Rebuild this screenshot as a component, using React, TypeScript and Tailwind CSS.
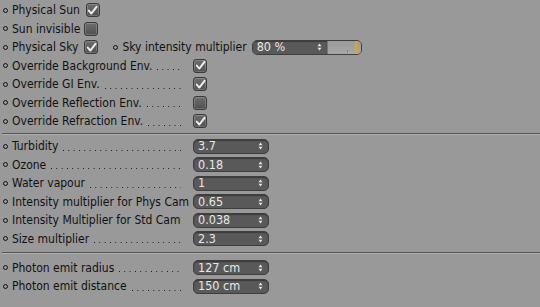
import React from 'react';

const FONT = { fontFamily: '"DejaVu Sans Condensed", "DejaVu Sans", sans-serif' };

function Bullet() {
  return <span className="mr-[4px] inline-block h-[5px] w-[5px] shrink-0 rounded-full border border-[#111]" />;
}

function Check({ on }: { on: boolean }) {
  return (
    <span className="relative inline-flex h-[14px] w-[14px] shrink-0 items-center justify-center rounded-[3px] border border-[#3a3a3a] bg-gradient-to-b from-[#6e6e6e] to-[#505050] shadow-[inset_0_0_0_1px_rgba(255,255,255,0.18)]">
      {on && (
        <svg width="11" height="11" viewBox="0 0 11 11">
          <path d="M1.8 5.6 L4.3 8.6 L9.5 1.8" fill="none" stroke="#f0f0f0" strokeWidth="1.9" strokeLinecap="round" strokeLinejoin="round" />
        </svg>
      )}
    </span>
  );
}

function Spinner() {
  return (
    <svg width="5" height="8" viewBox="0 0 5 8" className="shrink-0">
      <path d="M0.5 3.2 L2.5 0.6 L4.5 3.2 Z" fill="#e6e6e6" />
      <path d="M0.5 4.8 L2.5 7.4 L4.5 4.8 Z" fill="#e6e6e6" />
    </svg>
  );
}

function Field({ value }: { value: string }) {
  return (
    <div className="flex h-[15px] w-[76px] items-center justify-between rounded-[5px] border border-[#3e3e3e] bg-[#595959] pl-[4px] pr-[5px] text-[12.5px] leading-none text-[#e8e8e8] shadow-[inset_0_1px_1px_rgba(0,0,0,0.35)]">
      <span>{value}</span>
      <Spinner />
    </div>
  );
}

function Dots() {
  return (
    <span className="mb-[5px] ml-[5px] mr-[2px] h-px min-w-0 flex-1 self-end bg-[linear-gradient(to_right,#151515_1px,transparent_1px)] bg-[length:5.33px_1px] bg-repeat-x" />
  );
}

function LeaderRow({ label, children, dots = true }: { label: string; children: React.ReactNode; dots?: boolean }) {
  return (
    <div className="flex h-[18.5px] items-center pl-[3px]">
      <div className="flex h-full w-[180px] items-center">
        <Bullet />
        <span className="whitespace-nowrap">{label}</span>
        {dots ? <Dots /> : <span className="flex-1" />}
      </div>
      <div className="ml-[10px] flex items-center">{children}</div>
    </div>
  );
}

function Separator({ h }: { h: string }) {
  return (
    <div className={`ml-[2px] flex flex-col justify-center ${h}`}>
      <div className="h-px bg-[#555]" />
      <div className="h-px bg-[#b0b0b0]" />
    </div>
  );
}

export default function App() {
  return (
    <div className="h-[307px] w-[540px] overflow-hidden bg-[#999999] pt-[1px] text-[12px] text-[#111]" style={FONT}>
      <div className="flex h-[18.5px] items-center pl-[3px]">
        <Bullet />
        <span className="mr-[6px]">Physical Sun</span>
        <Check on />
      </div>
      <div className="flex h-[18.5px] items-center pl-[3px]">
        <Bullet />
        <span className="mr-[4px]">Sun invisible</span>
        <Check on={false} />
      </div>
      <div className="flex h-[18.5px] items-center pl-[3px]">
        <Bullet />
        <span className="mr-[6px]">Physical Sky</span>
        <Check on />
        <span className="ml-[15px]" />
        <Bullet />
        <span className="mr-[5px]">Sky intensity multiplier</span>
        <div className="flex h-[15px] w-[110px] items-stretch overflow-hidden rounded-[5px] border border-[#3e3e3e] text-[12.5px] leading-none text-[#e8e8e8]">
          <div className="flex w-[74px] items-center justify-between bg-[#595959] pl-[4px] pr-[5px] shadow-[inset_0_1px_1px_rgba(0,0,0,0.35)]">
            <span>80 %</span>
            <Spinner />
          </div>
          <div className="relative flex-1 border-l border-[#777] bg-gradient-to-b from-[#9a9a9a] to-[#a8a8a8]">
            <span className="absolute bottom-[1px] left-[19px] h-[3px] w-px bg-[#c08020]" />
            <span className="absolute bottom-0 right-[4px] top-0 w-[2px] bg-[#f0a010]" />
          </div>
        </div>
      </div>
      <LeaderRow label="Override Background Env."><Check on /></LeaderRow>
      <LeaderRow label="Override GI Env."><Check on /></LeaderRow>
      <LeaderRow label="Override Reflection Env."><Check on={false} /></LeaderRow>
      <LeaderRow label="Override Refraction Env."><Check on /></LeaderRow>
      <Separator h="h-[6.5px]" />
      <LeaderRow label="Turbidity"><Field value="3.7" /></LeaderRow>
      <LeaderRow label="Ozone"><Field value="0.18" /></LeaderRow>
      <LeaderRow label="Water vapour"><Field value="1" /></LeaderRow>
      <LeaderRow label="Intensity multiplier for Phys Cam" dots={false}><Field value="0.65" /></LeaderRow>
      <LeaderRow label="Intensity Multiplier for Std Cam" dots={false}><Field value="0.038" /></LeaderRow>
      <LeaderRow label="Size multiplier"><Field value="2.3" /></LeaderRow>
      <Separator h="h-[10.5px]" />
      <LeaderRow label="Photon emit radius"><Field value="127 cm" /></LeaderRow>
      <LeaderRow label="Photon emit distance"><Field value="150 cm" /></LeaderRow>
    </div>
  );
}
